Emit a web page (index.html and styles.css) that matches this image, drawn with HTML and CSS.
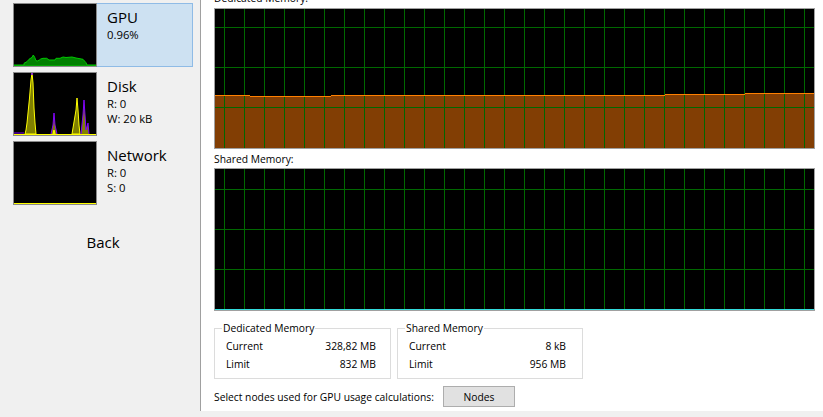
FILE: index.html
```html
<!DOCTYPE html>
<html>
<head>
<meta charset="utf-8">
<link rel="stylesheet" href="styles.css">
</head>
<body>
<div class="app">
  <aside class="sidebar">
    <div class="item selected">
      <div class="thumb">
        <svg width="82" height="62" viewBox="0 0 82 62">
          <path d="M0 61 L10 61 L10 59.3 L13 57.7 L15 55.3 L18 53.3 L19.3 51 L20.7 53.3 L22 56.7 L23.3 57 L25.3 56 L26.7 55 L29 54.3 L32.7 54.3 L35 56 L41 56 L42 54.3 L46 54.3 L49 53 L52 53.5 L58 53 L62 54 L69 55.3 L72 58.7 L73 61 L82 61 L82 62 L0 62 Z" fill="#008000" stroke="#00c800" stroke-width="1"/>
        </svg>
      </div>
      <div class="info">
        <div class="title">GPU</div>
        <div class="sub">0.96%</div>
      </div>
    </div>
    <div class="item">
      <div class="thumb">
        <svg width="82" height="62" viewBox="0 0 82 62">
          <path d="M11 61 L12 57 L13 50 L14 40 L15.5 25 L17 7 L18 0 L19 10 L20 35 L21 50 L22 61 Z" fill="#808000" stroke="#ffff00" stroke-width="1"/>
          <path d="M37 61 L39 52 L40 40 L41 52 L43 61" fill="#808000" stroke="#8000ff" stroke-width="1"/>
          <path d="M39 61 L40 57 L41 61 Z" fill="#808000" stroke="#ffff00" stroke-width="1"/>
          <path d="M58 61 L60 49 L62 37 L63 25 L64 37 L65 52 L66 61 Z" fill="#808000" stroke="#ffff00" stroke-width="1"/>
          <path d="M67 61 L69 42 L70 27 L71 42 L72 57 L74 50 L75 61" fill="#808000" stroke="#8000ff" stroke-width="1"/>
          <path d="M0 60 L10 60" stroke="#8000ff" stroke-width="1"/>
          <path d="M18 0 L18 2" stroke="#8000ff" stroke-width="1.5"/>
          <path d="M0 61.5 L82 61.5" stroke="#ffff00" stroke-width="1"/>
        </svg>
      </div>
      <div class="info">
        <div class="title">Disk</div>
        <div class="sub">R: 0</div>
        <div class="sub">W: 20 kB</div>
      </div>
    </div>
    <div class="item">
      <div class="thumb">
        <svg width="82" height="62" viewBox="0 0 82 62">
          <path d="M0 61.5 L82 61.5" stroke="#ffff00" stroke-width="1"/>
        </svg>
      </div>
      <div class="info">
        <div class="title">Network</div>
        <div class="sub">R: 0</div>
        <div class="sub">S: 0</div>
      </div>
    </div>
    <div class="back">Back</div>
  </aside>

  <main class="detail">
    <div class="cap cap-top">Dedicated Memory:</div>
    <div class="graph g1">
      <svg width="599" height="139" viewBox="0 0 599 139">
        <path d="M0 86 L35 86 L35 87 L116 87 L116 86 L450 86 L450 85 L530 85 L530 84 L599 84 L599 139 L0 139 Z" fill="#823e04"/>
        <g stroke="#006800" stroke-width="1">
          <path d="M0 18.5 H599 M0 58.5 H599 M0 98.5 H599"/>
          <path d="M9.5 0 V139 M29.5 0 V139 M49.5 0 V139 M69.5 0 V139 M89.5 0 V139 M109.5 0 V139 M129.5 0 V139 M149.5 0 V139 M169.5 0 V139 M189.5 0 V139 M209.5 0 V139 M229.5 0 V139 M249.5 0 V139 M269.5 0 V139 M289.5 0 V139 M309.5 0 V139 M329.5 0 V139 M349.5 0 V139 M369.5 0 V139 M389.5 0 V139 M409.5 0 V139 M429.5 0 V139 M449.5 0 V139 M469.5 0 V139 M489.5 0 V139 M509.5 0 V139 M529.5 0 V139 M549.5 0 V139 M569.5 0 V139 M589.5 0 V139"/>
        </g>
        <path d="M0 86.5 L35 86.5 M35 87.5 L116 87.5 M116 86.5 L450 86.5 M450 85.5 L530 85.5 M530 84.5 L599 84.5" stroke="#ff8000" stroke-width="1"/>
      </svg>
    </div>
    <div class="cap cap-mid">Shared Memory:</div>
    <div class="graph g2">
      <svg width="599" height="141" viewBox="0 0 599 141">
        <g stroke="#006800" stroke-width="1">
          <path d="M0 20.5 H599 M0 60.5 H599 M0 100.5 H599"/>
          <path d="M9.5 0 V141 M29.5 0 V141 M49.5 0 V141 M69.5 0 V141 M89.5 0 V141 M109.5 0 V141 M129.5 0 V141 M149.5 0 V141 M169.5 0 V141 M189.5 0 V141 M209.5 0 V141 M229.5 0 V141 M249.5 0 V141 M269.5 0 V141 M289.5 0 V141 M309.5 0 V141 M329.5 0 V141 M349.5 0 V141 M369.5 0 V141 M389.5 0 V141 M409.5 0 V141 M429.5 0 V141 M449.5 0 V141 M469.5 0 V141 M489.5 0 V141 M509.5 0 V141 M529.5 0 V141 M549.5 0 V141 M569.5 0 V141 M589.5 0 V141"/>
        </g>
        <path d="M0 140.5 H599" stroke="#33dddd" stroke-width="1"/>
      </svg>
    </div>
    <div class="groups">
      <fieldset class="group group-ded">
        <legend>Dedicated Memory</legend>
        <div class="row"><span>Current</span><span>328,82 MB</span></div>
        <div class="row"><span>Limit</span><span>832 MB</span></div>
      </fieldset>
      <fieldset class="group group-sh">
        <legend>Shared Memory</legend>
        <div class="row"><span>Current</span><span>8 kB</span></div>
        <div class="row"><span>Limit</span><span>956 MB</span></div>
      </fieldset>
    </div>
    <div class="nodes-row">
      <span class="nodes-label">Select nodes used for GPU usage calculations:</span>
      <button class="nodes-btn">Nodes</button>
    </div>
  </main>
</div>
</body>
</html>
```

FILE: styles.css
```css
* { box-sizing: border-box; }
html, body { margin: 0; padding: 0; }
body {
  background: #f0f0f0;
  font-family: "Open Sans", "Noto Sans", sans-serif;
  font-size: 10.3px;
  color: #000;
  overflow: hidden;
}
.app {
  display: flex;
  height: 411px;
  width: 823px;
}
.sidebar {
  width: 200px;
  flex: none;
  padding: 3px 7px 0 13px;
  display: flex;
  flex-direction: column;
  gap: 5px;
}
.item {
  display: flex;
  height: 64px;
  width: 180px;
  border: 1px solid transparent;
}
.item.selected {
  background: #cde1f2;
  border-color: #8fbbe6;
}
.thumb {
  width: 84px;
  height: 64px;
  margin: -1px 0 0 -1px;
  border: 1px solid #8a8a8a;
  background: #000;
  flex: none;
}
.thumb svg { display: block; }
.info {
  padding: 3px 0 0 10px;
}
.title {
  font-size: 15px;
  line-height: 21px;
}
.sub {
  font-size: 11.3px;
  line-height: 14.5px;
}
.back {
  margin-top: 22px;
  text-align: center;
  font-size: 15px;
  line-height: 20px;
}
.detail {
  width: 623px;
  flex: none;
  background: #fff;
  border-left: 1px solid #a0a0a0;
  padding-left: 13px;
}
.cap {
  line-height: 15px;
  white-space: nowrap;
}
.cap-top {
  margin-top: -9px;
  margin-bottom: 2px;
}
.cap-mid {
  height: 19px;
  padding-top: 3px;
}
.graph {
  width: 601px;
  border: 1px solid #a0a0a0;
  background: #000;
}
.graph svg { display: block; }
.groups {
  display: flex;
  gap: 6px;
  margin-top: 10px;
}
.group {
  margin: 0;
  border: 1px solid #dcdcdc;
  padding: 1px 14px 5px 11px;
  min-width: 0;
}
.group-ded { width: 177px; }
.group-sh { width: 186px; padding-right: 16px; }
.group legend {
  padding: 0 1px;
  margin-left: -4px;
  line-height: 15px;
}
.row {
  display: flex;
  justify-content: space-between;
  line-height: 18px;
}
.nodes-row {
  display: flex;
  align-items: center;
  margin-top: 7px;
}
.nodes-label {
  width: 229px;
  flex: none;
  white-space: nowrap;
}
.nodes-btn {
  width: 72px;
  height: 21px;
  border: 1px solid #adadad;
  background: #e1e1e1;
  font: inherit;
  color: #000;
  padding: 0;
  border-radius: 0;
}
```
